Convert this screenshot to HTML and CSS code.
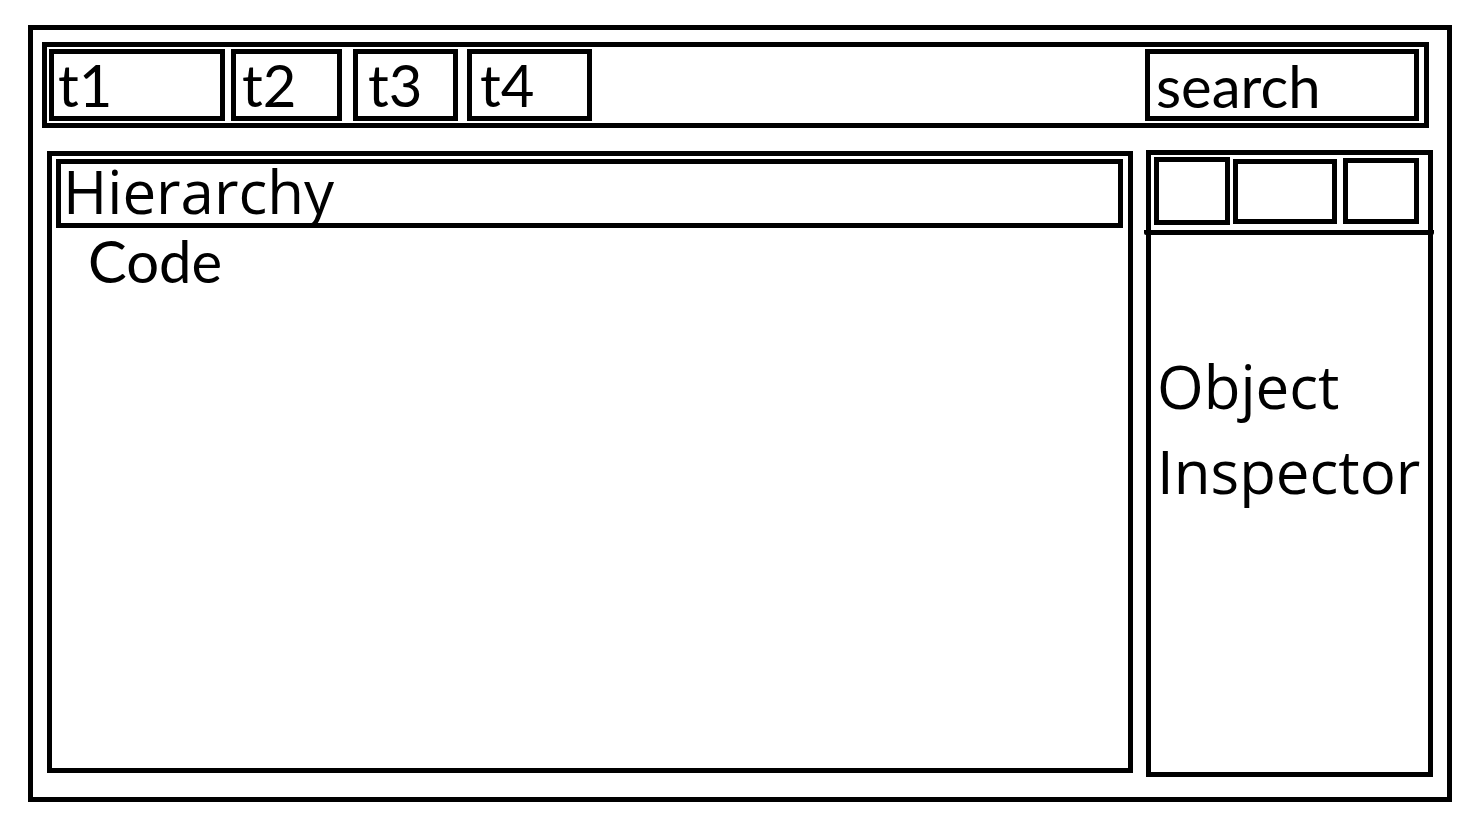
FILE: index.html
```html
<!DOCTYPE html>
<html lang="en">
<head>
<meta charset="utf-8">
<meta name="viewport" content="width=device-width, initial-scale=1">
<title>Object Inspector</title>
<link rel="stylesheet" href="styles.css">
</head>
<body>
<div class="window">
  <header class="toolbar">
    <nav class="tabs" aria-label="Tabs">
      <button type="button" class="tab tab-first">t1</button>
      <button type="button" class="tab tab-second">t2</button>
      <button type="button" class="tab tab-third">t3</button>
      <button type="button" class="tab tab-fourth">t4</button>
    </nav>
    <input class="search" type="text" placeholder="search" aria-label="search">
  </header>
  <div class="workspace">
    <main class="editor">
      <h1 class="hierarchy">Hierarchy</h1>
      <p class="code">Code</p>
    </main>
    <aside class="inspector">
      <div class="tools">
        <button type="button" class="tool tool-first" aria-label="Tool 1"></button>
        <button type="button" class="tool tool-wide" aria-label="Tool 2"></button>
        <button type="button" class="tool tool-last" aria-label="Tool 3"></button>
      </div>
      <h2 class="inspector-title">Object Inspector</h2>
    </aside>
  </div>
</div>
</body>
</html>
```
FILE: styles.css
```css
* { box-sizing: border-box; }

body {
  margin: 0;
  min-height: 100vh;
  display: flex;
  padding: 25px 26px 33px 28px;
  background: #fff;
  color: #000;
  font-family: Lato, "Open Sans", sans-serif;
  font-size: 58px;
}

.window, .toolbar, .tab, .search, .editor, .hierarchy, .inspector, .tool {
  border: 5px solid #000;
  background: #fff;
}

.window {
  flex: 1;
  min-width: 0;
  display: flex;
  flex-direction: column;
  gap: 22px;
  padding: 12px 14px 20px 9px;
}

.toolbar {
  display: flex;
  justify-content: space-between;
  margin-right: 4px;
  padding: 2px 5px 2px 2px;
}

.tabs { display: flex; }

.tab, .search {
  height: 72px;
  border-radius: 0;
  color: #000;
  font: inherit;
  line-height: 62px;
  text-align: left;
}

.tab { padding: 0 0 0 4px; }
.tab-first { width: 176px; }
.tab-second { width: 111px; margin-left: 6px; padding-left: 6px; }
.tab-third { width: 105px; margin-left: 11px; padding-left: 10px; }
.tab-fourth { width: 125px; margin-left: 9px; padding-left: 8px; }

.search { width: 274px; padding: 0 6px; }
.search::placeholder { color: #000; opacity: 1; }

.workspace {
  flex: 1;
  display: grid;
  grid-template-columns: minmax(0, 1fr) 287px;
  gap: 13px;
  margin-left: 5px;
}

.editor {
  margin: 1px 0 4px;
  padding: 3px 5px 0 4px;
}

.hierarchy, .inspector-title {
  margin: 0;
  font-family: "Open Sans", "Noto Sans", sans-serif;
  font-size: 60px;
  font-weight: 400;
}

.hierarchy {
  height: 69px;
  padding-left: 2px;
  line-height: 54px;
}

.code {
  margin: 0;
  padding: 0 0 0 32px;
  line-height: 66px;
}

.tools {
  display: flex;
  align-items: center;
  height: 80px;
  margin: 0 -6px 0 -7px;
  padding: 0 0 3px 10px;
  border-bottom: 5px solid #000;
  border-radius: 2px;
}

.tool { height: 66px; padding: 0; border-radius: 0; }
.tool-first { width: 76px; height: 68px; }
.tool-wide { width: 104px; height: 65px; margin-left: 3px; }
.tool-last { width: 76px; margin-left: 6px; }

.inspector-title {
  margin-top: 109px;
  padding-left: 6px;
  line-height: 85px;
}
```
